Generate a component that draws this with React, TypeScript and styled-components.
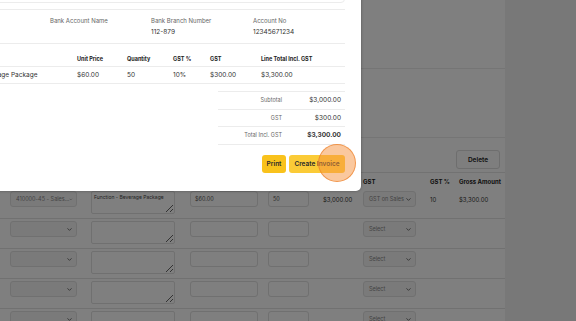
import styled, { createGlobalStyle } from 'styled-components'
import { ChevronDown } from 'lucide-react'

const GlobalStyle = createGlobalStyle`
  html, body {
    margin: 0;
    padding: 0;
    background: #f0f0f0;
    overflow: hidden;
  }
  body {
    font-family: Inter, "Noto Sans", sans-serif;
    color: #333;
  }
`

const Page = styled.div`
  position: relative;
  width: 576px;
  height: 321px;
  overflow: hidden;
  display: flex;
`

const Card = styled.div`
  width: 505px;
  background: #fff;
  display: flex;
  flex-direction: column;
`

const Section = styled.div<{ h: number }>`
  height: ${({ h }) => h}px;
  border-bottom: 1px solid #ebebeb;
  flex-shrink: 0;
`

const Toolbar = styled.div`
  height: 35px;
  display: flex;
  justify-content: flex-end;
  align-items: flex-end;
  padding: 0 5px 3px 0;
  box-sizing: border-box;
  border-bottom: 1px solid #e4e4e4;
  flex-shrink: 0;
`

const GhostButton = styled.button`
  width: 44px;
  height: 19px;
  border: 1px solid #dcdcdc;
  border-radius: 3px;
  background: #fcfcfc;
  font-family: inherit;
  font-size: 6.5px;
  font-weight: 600;
  color: #222;
  padding: 0;
`

const cols = '10px 81px 99px 78px 55px 40px 67px 29px 46px'

const HeadRow = styled.div`
  display: grid;
  grid-template-columns: ${cols};
  height: 16px;
  align-items: center;
  font-size: 6px;
  font-weight: 700;
  color: #222;
  flex-shrink: 0;
`

const Row = styled.div`
  display: grid;
  grid-template-columns: ${cols};
  height: 30px;
  box-sizing: border-box;
  padding-top: 2px;
  align-items: start;
  border-bottom: 1px solid #e2e2e2;
  flex-shrink: 0;
`

const Cell = styled.div`
  font-size: 6px;
  color: #333;
  padding-top: 5px;
`

const SelectBox = styled.div<{ w: number }>`
  width: ${({ w }) => w}px;
  height: 16px;
  box-sizing: border-box;
  border: 1px solid #e0e0e0;
  border-radius: 3px;
  background: #f4f4f4;
  display: flex;
  align-items: center;
  justify-content: space-between;
  padding: 0 3px 0 5px;
  font-size: 5.5px;
  color: #888;
  white-space: nowrap;
  overflow: hidden;
`

const Area = styled.textarea`
  width: 84px;
  height: 23px;
  box-sizing: border-box;
  border: 1px solid #e0e0e0;
  border-radius: 2px;
  background: #fff;
  font-family: inherit;
  font-size: 5px;
  color: #444;
  padding: 2px 2px;
  margin: 0;
  display: block;
`

const Field = styled.div<{ w: number }>`
  width: ${({ w }) => w}px;
  height: 16px;
  box-sizing: border-box;
  border: 1px solid #e0e0e0;
  border-radius: 3px;
  background: #fff;
  font-size: 5.5px;
  color: #555;
  padding: 4px 0 0 4px;
`

const Overlay = styled.div`
  position: absolute;
  inset: 0;
  background: rgba(0, 0, 0, 0.5);
`

const Modal = styled.div`
  position: absolute;
  left: -120px;
  top: -19px;
  width: 481px;
  box-sizing: border-box;
  padding: 0 16px 18px;
  background: #fff;
  border-bottom-right-radius: 5px;
  box-shadow: 0 0 3px rgba(0, 0, 0, 0.35);
`

const TopBox = styled.div`
  height: 22px;
  box-sizing: border-box;
  border: 1px solid #ececec;
  border-radius: 4px;
`

const BankGrid = styled.div`
  margin-top: 6px;
  display: grid;
  grid-template-columns: 154px 101px 102px 1fr;
  row-gap: 3px;
  padding: 7px 0;
  border-top: 1px solid #ececec;
  border-bottom: 1px solid #ececec;
`

const Label = styled.div`
  font-size: 6px;
  line-height: 8px;
  color: #666;
`

const Value = styled.div`
  font-size: 6.5px;
  line-height: 8px;
  color: #333;
  white-space: nowrap;
`

const tableCols = '1fr 97px 50px 46px 37px 51px 84px'

const TableHead = styled.div`
  margin-top: 8px;
  display: grid;
  grid-template-columns: ${tableCols};
  height: 14px;
  align-items: center;
  border-bottom: 1px solid #ececec;
  font-size: 5.5px;
  font-weight: 700;
  color: #222;

  & > span:first-child {
    grid-column: span 2;
  }
`

const TableRow = styled.div`
  display: grid;
  grid-template-columns: ${tableCols};
  height: 16px;
  align-items: center;
  border-bottom: 1px solid #ececec;
  font-size: 6.5px;
  color: #333;
  white-space: nowrap;
`

const Totals = styled.div`
  margin: 7px 0 0 auto;
  width: 127px;
  border-top: 1px solid #ececec;
`

const TotalRow = styled.div<{ strong?: boolean }>`
  display: grid;
  grid-template-columns: 1fr 59px;
  height: 16.5px;
  align-items: center;
  padding-right: 4px;
  border-bottom: 1px solid #ececec;
  text-align: right;
  font-size: 5.5px;
  color: #666;

  & > span:last-child {
    font-size: 6.5px;
    color: #333;
    font-weight: ${({ strong }) => (strong ? 700 : 400)};
  }
`

const Actions = styled.div`
  position: relative;
  margin-top: 10px;
  display: flex;
  justify-content: flex-end;
  gap: 3px;
`

const YellowButton = styled.button<{ w: number; light?: boolean }>`
  width: ${({ w }) => w}px;
  height: 18px;
  border: none;
  border-radius: 3px;
  padding: 0;
  background: ${({ light }) => (light ? '#fbcb37' : '#f9c21c')};
  font-family: inherit;
  font-size: 6.5px;
  font-weight: 600;
  color: #2a2a2a;
`

const ClickMark = styled.div`
  position: absolute;
  right: -11px;
  top: -11px;
  width: 38px;
  height: 38px;
  border-radius: 50%;
  box-sizing: border-box;
  background: rgba(246, 146, 62, 0.5);
  border: 1px solid rgba(238, 128, 40, 0.7);
  pointer-events: none;
`

const Chevron = () => <ChevronDown size={7} strokeWidth={3} color="#666" />

const emptyRows = [0, 1, 2, 3]

export default function App() {
  return (
    <>
      <GlobalStyle />
      <Page>
        <Card>
          <Section h={68} />
          <Section h={68} />
          <Toolbar>
            <GhostButton>Delete</GhostButton>
          </Toolbar>
          <HeadRow>
            <span />
            <span>Account</span>
            <span>Description</span>
            <span>Unit Price</span>
            <span>Qty</span>
            <span>Amount</span>
            <span>GST</span>
            <span>GST %</span>
            <span>Gross Amount</span>
          </HeadRow>
          <Row>
            <span />
            <SelectBox w={67}>410000-45 - Sales... <Chevron /></SelectBox>
            <Area defaultValue="Function - Beverage Package" />
            <Field w={68}>$60.00</Field>
            <Field w={41}>50</Field>
            <Cell>$3,000.00</Cell>
            <SelectBox w={53}>GST on Sales <Chevron /></SelectBox>
            <Cell>10</Cell>
            <Cell>$3,300.00</Cell>
          </Row>
          {emptyRows.map((i) => (
            <Row key={i}>
              <span />
              <SelectBox w={67}><span /> <Chevron /></SelectBox>
              <Area />
              <Field w={68} />
              <Field w={41} />
              <Cell />
              <SelectBox w={53}>Select <Chevron /></SelectBox>
              <Cell />
              <Cell />
            </Row>
          ))}
        </Card>
        <Overlay />
        <Modal>
          <TopBox />
          <BankGrid>
            <Label />
            <Label>Bank Account Name</Label>
            <Label>Bank Branch Number</Label>
            <Label>Account No</Label>
            <Value />
            <Value />
            <Value>112-879</Value>
            <Value>12345671234</Value>
          </BankGrid>
          <TableHead>
            <span />
            <span>Unit Price</span>
            <span>Quantity</span>
            <span>GST %</span>
            <span>GST</span>
            <span>Line Total Incl. GST</span>
          </TableHead>
          <TableRow>
            <span />
            <span>Beverage Package</span>
            <span>$60.00</span>
            <span>50</span>
            <span>10%</span>
            <span>$300.00</span>
            <span>$3,300.00</span>
          </TableRow>
          <Totals>
            <TotalRow><span>Subtotal</span><span>$3,000.00</span></TotalRow>
            <TotalRow><span>GST</span><span>$300.00</span></TotalRow>
            <TotalRow strong><span>Total Incl. GST</span><span>$3,300.00</span></TotalRow>
          </Totals>
          <Actions>
            <YellowButton w={24}>Print</YellowButton>
            <YellowButton w={56} light>Create Invoice</YellowButton>
            <ClickMark />
          </Actions>
        </Modal>
      </Page>
    </>
  )
}
